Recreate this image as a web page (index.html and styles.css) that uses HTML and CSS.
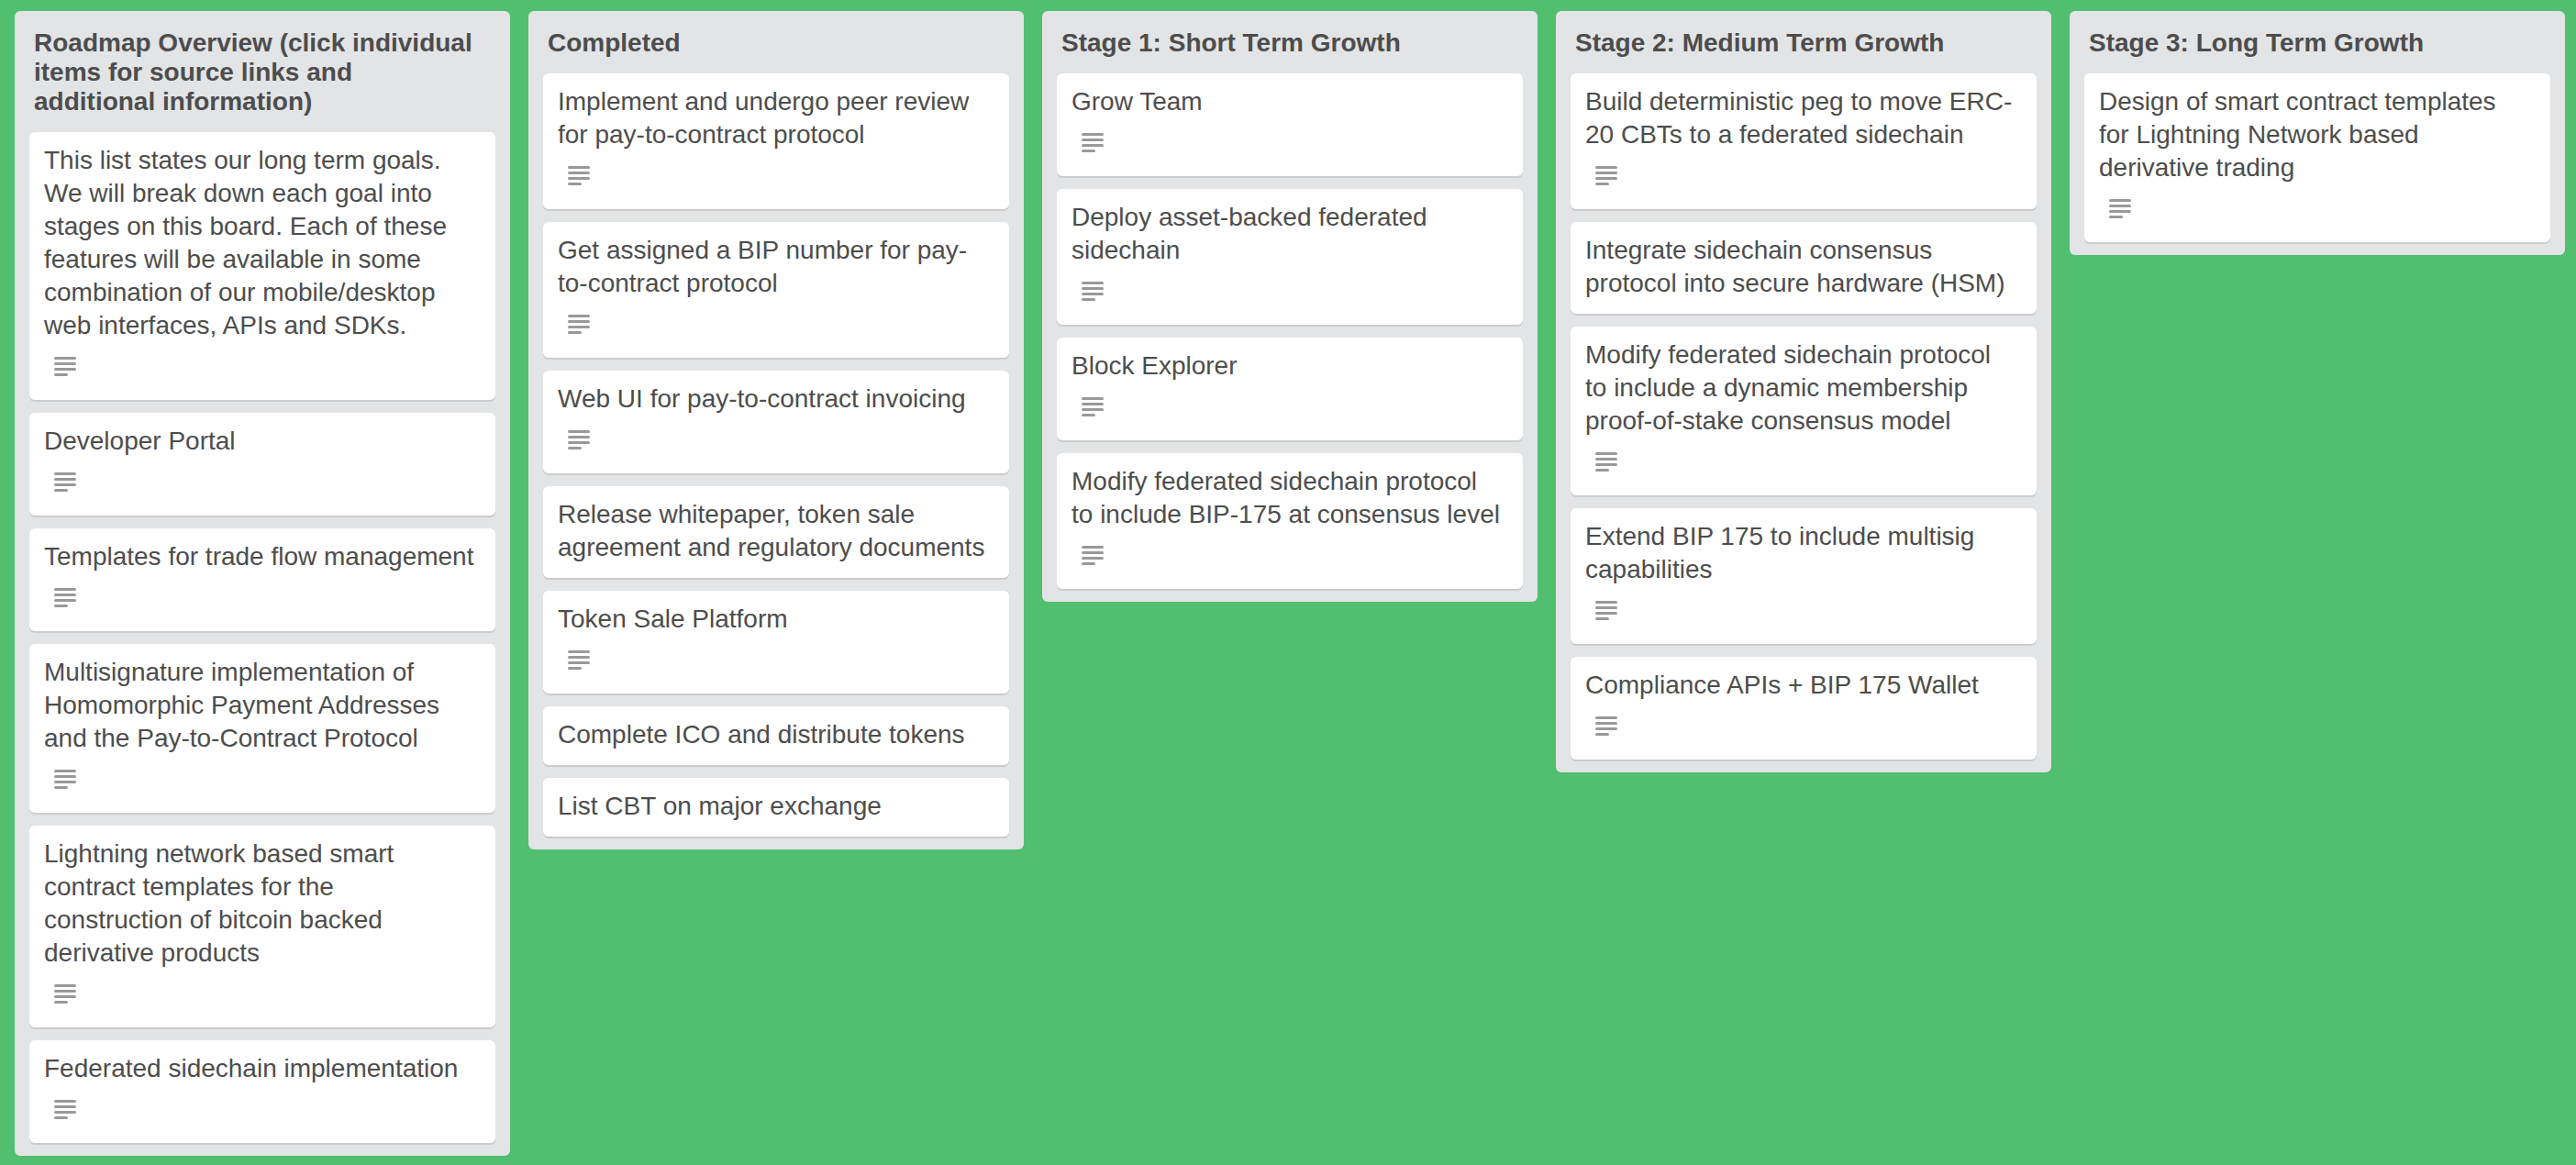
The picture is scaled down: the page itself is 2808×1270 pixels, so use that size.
FILE: index.html
```html
<!DOCTYPE html>
<html lang="en">
<head>
    <meta charset="UTF-8">
    <meta name="viewport" content="width=device-width, initial-scale=1.0">
    <title>Roadmap</title>
    <link rel="stylesheet" href="styles.css">
</head>
<body>
<!-- description badge, reused by the cards -->
<svg class="sprite" aria-hidden="true">
    <symbol id="description" viewBox="0 0 24 21">
        <rect x="0" y="0" width="24" height="3" rx="1.5"/>
        <rect x="0" y="6" width="24" height="3" rx="1.5"/>
        <rect x="0" y="12" width="24" height="3" rx="1.5"/>
        <rect x="0" y="18" width="15" height="3" rx="1.5"/>
    </symbol>
</svg>

<main class="board">
    <section class="list">
        <h2>Roadmap Overview (click individual<br> items for source links and<br> additional information)</h2>
        <a class="card" href="#">This list states our long term goals. We will break down each goal into stages on this board. Each of these features will be available in some combination of our mobile/desktop web interfaces, APIs and SDKs.
            <svg class="badge"><use href="#description"/></svg>
        </a>
        <a class="card" href="#">Developer Portal
            <svg class="badge"><use href="#description"/></svg>
        </a>
        <a class="card" href="#">Templates for trade flow management
            <svg class="badge"><use href="#description"/></svg>
        </a>
        <a class="card" href="#">Multisignature implementation of Homomorphic Payment Addresses and the Pay-to-Contract Protocol
            <svg class="badge"><use href="#description"/></svg>
        </a>
        <a class="card" href="#">Lightning network based smart contract templates for the<br> construction of bitcoin backed<br> derivative products
            <svg class="badge"><use href="#description"/></svg>
        </a>
        <a class="card" href="#">Federated sidechain implementation
            <svg class="badge"><use href="#description"/></svg>
        </a>
    </section>

    <section class="list">
        <h2>Completed</h2>
        <a class="card" href="#">Implement and undergo peer review for pay-to-contract protocol
            <svg class="badge"><use href="#description"/></svg>
        </a>
        <a class="card" href="#">Get assigned a BIP number for pay-to-contract protocol
            <svg class="badge"><use href="#description"/></svg>
        </a>
        <a class="card" href="#">Web UI for pay-to-contract invoicing
            <svg class="badge"><use href="#description"/></svg>
        </a>
        <a class="card" href="#">Release whitepaper, token sale agreement and regulatory documents</a>
        <a class="card" href="#">Token Sale Platform
            <svg class="badge"><use href="#description"/></svg>
        </a>
        <a class="card" href="#">Complete ICO and distribute tokens</a>
        <a class="card" href="#">List CBT on major exchange</a>
    </section>

    <section class="list">
        <h2>Stage 1: Short Term Growth</h2>
        <a class="card" href="#">Grow Team
            <svg class="badge"><use href="#description"/></svg>
        </a>
        <a class="card" href="#">Deploy asset-backed federated sidechain
            <svg class="badge"><use href="#description"/></svg>
        </a>
        <a class="card" href="#">Block Explorer
            <svg class="badge"><use href="#description"/></svg>
        </a>
        <a class="card" href="#">Modify federated sidechain protocol<br> to include BIP-175 at consensus level
            <svg class="badge"><use href="#description"/></svg>
        </a>
    </section>

    <section class="list">
        <h2>Stage 2: Medium Term Growth</h2>
        <a class="card" href="#">Build deterministic peg to move ERC-20 CBTs to a federated sidechain
            <svg class="badge"><use href="#description"/></svg>
        </a>
        <a class="card" href="#">Integrate sidechain consensus protocol into secure hardware (HSM)</a>
        <a class="card" href="#">Modify federated sidechain protocol<br> to include a dynamic membership<br> proof-of-stake consensus model
            <svg class="badge"><use href="#description"/></svg>
        </a>
        <a class="card" href="#">Extend BIP 175 to include multisig capabilities
            <svg class="badge"><use href="#description"/></svg>
        </a>
        <a class="card" href="#">Compliance APIs + BIP 175 Wallet
            <svg class="badge"><use href="#description"/></svg>
        </a>
    </section>

    <section class="list">
        <h2>Stage 3: Long Term Growth</h2>
        <a class="card" href="#">Design of smart contract templates<br> for Lightning Network based<br> derivative trading
            <svg class="badge"><use href="#description"/></svg>
        </a>
    </section>
</main>
</body>
</html>
```
FILE: styles.css
```css
* {
    box-sizing: border-box;
}

body {
    margin: 0;
    background-color: #51be70;
    color: #4d4d4d;
    font-family: "Helvetica Neue", "Liberation Sans", Arial, sans-serif;
    font-size: 28px;
}

.sprite {
    display: none;
}

.board {
    display: flex;
    align-items: flex-start;
    gap: 20px;
    padding: 12px 12px 10px 16px;
}

.list {
    flex: 1;
    min-width: 0;
    display: flex;
    flex-direction: column;
    gap: 14px;
    padding: 19px 16px 14px;
    border-radius: 6px;
    background-color: #e2e4e6;
}

.list h2 {
    margin: 0;
    padding: 0 0 3px 5px;
    font-size: 28px;
    line-height: 32px;
}

.card {
    padding: 13px 16px 15px;
    border-radius: 6px;
    background-color: #fff;
    box-shadow: 0 2px 0 #ccc; /* hard bottom edge */
    color: inherit;
    line-height: 36px;
    text-decoration: none;
}

.card:hover {
    background-color: #f5f5f5;
}

.badge {
    display: block;
    width: 24px;
    height: 21px;
    margin: 16px 11px 11px;
    fill: #999;
}

@media (max-width: 1400px) {
    .board {
        flex-wrap: wrap;
    }

    .list {
        flex: 0 0 540px;
    }
}
```
